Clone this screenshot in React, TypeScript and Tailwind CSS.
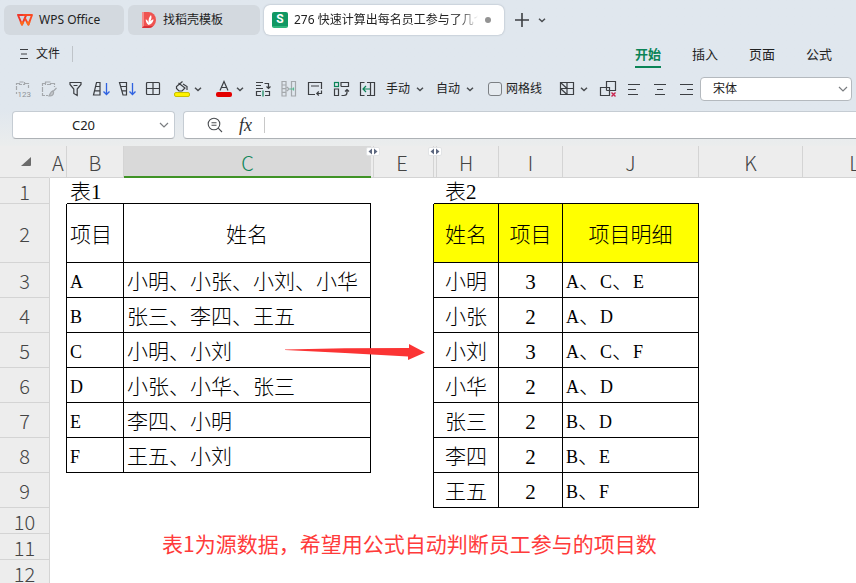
import React, { useState } from "react";

const tableOne = [
  ["A", "小明、小张、小刘、小华"],
  ["B", "张三、李四、王五"],
  ["C", "小明、小刘"],
  ["D", "小张、小华、张三"],
  ["E", "李四、小明"],
  ["F", "王五、小刘"],
];

const tableTwo = [
  ["小明", "3", "A、C、E"],
  ["小张", "2", "A、D"],
  ["小刘", "3", "A、C、F"],
  ["小华", "2", "A、D"],
  ["张三", "2", "B、D"],
  ["李四", "2", "B、E"],
  ["王五", "2", "B、F"],
];

const menuTabs = ["开始", "插入", "页面", "公式"];

const Icon = ({ children, color = "#3c3f43" }: { children: React.ReactNode; color?: string }) => (
  <svg width="18" height="18" viewBox="0 0 18 18" fill="none" stroke={color} strokeWidth="1.2" aria-hidden="true">
    {children}
  </svg>
);

const Tool = ({ label, children }: { label: string; children: React.ReactNode }) => (
  <button type="button" title={label} aria-label={label} className="flex items-center shrink-0">
    {children}
  </button>
);

const Chevron = () => (
  <svg width="8" height="8" viewBox="0 0 8 8" fill="none" stroke="#4a4d51" strokeWidth="1.5" aria-hidden="true">
    <path d="M1 2.8 L4 5.5 L7 2.8" />
  </svg>
);

const WideChevron = () => (
  <svg width="10" height="10" viewBox="0 0 10 10" fill="none" stroke="#7a7d80" strokeWidth="1.2" aria-hidden="true">
    <path d="M1 3 L5 7 L9 3" />
  </svg>
);

const DownArrow = () => <path d="M14.5 3 V14.5 M11.5 11.5 L14.5 14.5 L17.5 11.5" stroke="#2f62e0" strokeWidth="1.3" />;

// latin letters are set a bit smaller so they sit well next to the hanzi
const CellText = ({ text }: { text: string }) => (
  <>
    {text.split(/([A-Z])/).map((part, i) =>
      /[A-Z]/.test(part) ? (
        <span key={i} className="text-[18px]">{part}</span>
      ) : (
        part
      )
    )}
  </>
);

const HiddenMark = () => (
  <span className="absolute z-10 -right-[9px] top-px flex h-[9px] w-[14px] items-center justify-center rounded-xs border border-[#e2e4e6] bg-white">
    <svg width="10" height="7" viewBox="0 0 10 7" fill="#5d6880" className="shrink-0" aria-hidden="true">
      <path d="M4 0.5 V6.5 L0.5 3.5 Z M6 0.5 V6.5 L9.5 3.5 Z" />
    </svg>
  </span>
);

const TitleBar = () => (
  <div className="flex h-10 items-center px-1">
    <button type="button" className="flex h-[30px] w-[120px] items-center gap-[6px] rounded-md bg-[#d3d9df] pl-[13px]">
      <svg width="16" height="12" viewBox="0 0 16 12" fill="none" stroke="#f0372b" strokeWidth="1.9" strokeLinejoin="round" aria-hidden="true">
        <path d="M1 1 H9.2 L5 10.6 Z" />
        <path d="M5.8 1 H15 L11.4 10.6 L7.8 4" stroke="#fb4a22" />
        <path d="M3.6 7.5 L5 10.6 L6.3 7.6 M10 8 L11.4 10.6 L12.6 7.5" stroke="#ff6a1a" />
      </svg>
      WPS Office
    </button>
    <button type="button" className="ml-1 flex h-[30px] w-[132px] items-center gap-[7px] rounded-md bg-[#d3d9df] pl-[14px]">
      <svg width="14" height="16" viewBox="0 0 14 16" aria-hidden="true">
        <path d="M0 0 H6.5 A7.5 8 0 0 1 6.5 16 H0 Z" fill="#ef5350" />
        <path d="M0 0 H2 V14 L0 16 Z" fill="#f58d8a" />
        <path d="M0 16 L2 14 H11 C10 15.3 8.5 16 6.5 16 Z" fill="#d93036" />
        <path d="M6.5 13 C4.5 11.5 3.5 9.5 3.8 7.3 C5.5 8.3 6.5 9.7 6.8 11.2 C6.2 8 6.8 5 9 3 C10 5.3 9.5 7 8.3 9 C9.3 7.9 10.4 7.4 11.6 7.4 C11.2 10 9.5 12.2 6.5 13 Z" fill="#fff" />
      </svg>
      找稻壳模板
    </button>
    <div className="ml-1 flex h-[30px] w-[240px] items-center rounded-md bg-white pl-2 shadow-[0_0_2px_#9aa5b1]">
      <span className="flex size-4 shrink-0 items-center justify-center rounded-xs border-b-2 border-[#2fb57c] bg-[#109863] font-[Roboto] text-[12px] leading-none font-bold text-white">S</span>
      <span className="ml-[6px] w-[184px] overflow-hidden whitespace-nowrap [mask-image:linear-gradient(to_right,black_90%,transparent)]">
        276 快速计算出每名员工参与了几个
      </span>
      <span className="ml-[7px] size-[6px] shrink-0 rounded-full bg-[#939393]"></span>
    </div>
    <button type="button" aria-label="新建" className="ml-[11px]">
      <svg width="14" height="14" viewBox="0 0 14 14" stroke="#3c3f43" strokeWidth="1.6" aria-hidden="true">
        <path d="M7 0 V14 M0 7 H14" />
      </svg>
    </button>
    <button type="button" aria-label="更多" className="ml-[9px]"><Chevron /></button>
  </div>
);

const MenuBar = () => {
  const [active, setActive] = useState("开始");
  return (
    <div className="flex h-8 items-center pl-5 pr-6">
      <button type="button" className="-mt-1 flex items-center gap-2">
        <svg width="8" height="12" viewBox="0 0 8 12" stroke="#3c3f43" strokeWidth="1" aria-hidden="true">
          <path d="M0 1.5 H8 M1 6 H7 M0 10.5 H8" />
        </svg>
        文件
      </button>
      <div className="-mt-1 ml-3 h-4 w-px bg-[#bfc4c9]"></div>
      <nav className="ml-auto flex gap-[31px] text-[13px]">
        {menuTabs.map((tab) => (
          <button
            key={tab}
            type="button"
            onClick={() => setActive(tab)}
            className={
              tab === active
                ? "h-6 border-b-2 border-[#0b8457] font-bold text-[#0b8457]"
                : "h-6 border-b-2 border-transparent"
            }
          >
            {tab}
          </button>
        ))}
      </nav>
    </div>
  );
};

const Toolbar = () => (
  <div className="flex h-[34px] items-center pl-[14px] pr-1">
    <div className="flex gap-2">
      <Tool label="粘贴数值">
        <Icon color="#a4a8ac">
          <path d="M5 3.5 H2.5 V10 M2.5 12 V14 M11 3.5 H14.5 V8 M5.5 2 H10.5 V4.5 H5.5 Z" strokeDasharray="4 1" />
          <text x="3.5" y="17" fontSize="8" fontFamily="Roboto" fill="#8f9398" stroke="none">123</text>
        </Icon>
      </Tool>
      <Tool label="粘贴格式">
        <Icon color="#a4a8ac">
          <path d="M5 3.5 H2.5 V15.5 H8 M11 3.5 H14.5 V7 M5.5 2 H10.5 V4.5 H5.5 Z" strokeDasharray="5 1" />
          <path d="M16.5 8 L12.5 12 M12.5 11 C10.5 11.5 10.5 14 9 15.8 C11.5 16.3 13.8 15 13.6 12.4 Z" fill="#c3c7cb" />
        </Icon>
      </Tool>
      <Tool label="筛选">
        <Icon>
          <path d="M4 2.5 H15 V4.5 L11.2 9 V15.5 L7.8 13.5 V9 L4 4.5 Z M7.5 5.5 H11.5" />
        </Icon>
      </Tool>
      <Tool label="升序">
        <Icon>
          <path d="M4.5 2.5 H8 V15 H1.5 Z M3.8 6.5 H8 M2.7 10.8 H8" />
          <DownArrow />
        </Icon>
      </Tool>
      <Tool label="降序">
        <Icon>
          <path d="M1.5 2.5 H8.5 V15 H5 Z M2.6 6.5 H8.5 M3.8 10.8 H8.5" />
          <DownArrow />
        </Icon>
      </Tool>
      <Tool label="边框">
        <Icon>
          <rect x="2.5" y="2.5" width="13" height="12" rx="1" />
          <path d="M9 2.5 V14.5 M2.5 8.5 H15.5" />
        </Icon>
      </Tool>
    </div>
    <div className="ml-[11px] flex gap-[13px]">
      <Tool label="填充颜色">
        <Icon>
          <path d="M5.5 3 L12 8 L9 11 H6 L3.5 8.5 V6.5 L9.5 1.5 M10 4 L14 6.5 V10" />
          <rect x="1.5" y="12.5" width="15" height="4" rx="1.5" fill="#fff200" stroke="#c9c000" strokeWidth="1" />
        </Icon>
        <span className="ml-[3px]"><Chevron /></span>
      </Tool>
      <Tool label="字体颜色">
        <svg width="18" height="18" viewBox="0 0 18 18" aria-hidden="true">
          <path d="M5 10.5 L9 1.5 L13 10.5 M6.3 7.5 H11.7" fill="none" stroke="#3c3f43" strokeWidth="1.2" />
          <rect x="1" y="12" width="16" height="5" rx="2" fill="#e30000" />
        </svg>
        <span className="ml-[3px]"><Chevron /></span>
      </Tool>
    </div>
    <div className="ml-[10px] flex gap-2">
      <Tool label="转置">
        <Icon>
          <path d="M2 2.5 H9 M2 5.5 H7 M2 8.5 H9 M10.5 3.5 H14.5 V8.5 M12.5 6.5 L14.5 8.5 L16.5 6.5 M7 11.5 H2.5 V15.5 H7 M11 11.5 H15.5 V15.5 H11" />
          <path d="M9 10.5 V16.5" stroke="#0b8457" />
        </Icon>
      </Tool>
      <Tool label="分列">
        <Icon color="#a4a8ac">
          <path d="M2 1.5 H6 V16 H2 Z M2 5 H6 M2 8.7 H6 M2 12.3 H6 M11.5 1.5 H15.5 V16 H11.5 Z M7 7 L9 9 L7 11" />
          <path d="M13.5 7.5 V10.5 M9.5 9 H13.5" stroke="#58b892" />
        </Icon>
      </Tool>
      <Tool label="自动换行">
        <Icon>
          <path d="M9 14.5 H2.5 V2.5 H15.5 V9 M5 6 H13 M15.5 10.5 V13.5 H11 M12.8 11.5 L10.8 13.5 L12.8 15.5" />
        </Icon>
      </Tool>
      <Tool label="套用表格">
        <Icon>
          <rect x="2.5" y="2.5" width="4" height="4" stroke="#0b8457" />
          <path d="M9 6.5 V2.5 H16.5 V6.5 H9 M2.5 9 H6.5 V15.5 H2.5 Z M9.5 15.5 H12 C14 15.5 15 14.5 15 12.5 V9.5 M13 11.5 L15 9.5 L17 11.5" />
        </Icon>
      </Tool>
      <Tool label="合并">
        <Icon>
          <path d="M6.5 2.5 H2.5 V15.5 H6.5 M9 2.5 H16.5 V15.5 H9 M12.5 2.5 V15.5" />
          <path d="M5 9 H12 M8 6 L5 9 L8 12" stroke="#0b8457" />
        </Icon>
      </Tool>
    </div>
    <div className="ml-[10px] flex gap-3">
      <button type="button" className="flex items-center gap-[6px]">手动 <Chevron /></button>
      <button type="button" className="flex items-center gap-[6px]">自动 <Chevron /></button>
    </div>
    <label className="ml-[14px] flex items-center gap-1 whitespace-nowrap">
      <input type="checkbox" className="size-[14px] appearance-none rounded-[3px] border border-[#7c8084] bg-[#e6ebf0] checked:bg-[#0b8457]" />
      网格线
    </label>
    <div className="ml-4 flex gap-[11px]">
      <Tool label="单元格样式">
        <Icon>
          <path d="M2.5 2.5 H15.5 V14.5 H2.5 Z M9 2.5 V14.5 M2.5 8.5 H15.5 M2.5 2.5 L9 8.5 M2.5 8.5 L9 14.5" />
        </Icon>
        <span className="ml-1"><Chevron /></span>
      </Tool>
      <Tool label="取消合并">
        <Icon>
          <path d="M7.5 10.5 V1.5 H16.5 V10.5 H7.5 M7.5 7.5 H1.5 V15.5 H10.5 V7.5 H7.5" />
          <path d="M12.5 12.5 L16.5 16.5 M16.5 12.5 L12.5 16.5" stroke="#c9254f" strokeWidth="1.4" />
        </Icon>
      </Tool>
    </div>
    <div className="ml-2 flex gap-2">
      <Tool label="左对齐">
        <Icon><path d="M3 4.5 H15 M3 9.5 H11 M3 14.5 H13" strokeWidth="1" /></Icon>
      </Tool>
      <Tool label="居中">
        <Icon><path d="M3 4.5 H15 M6 9.5 H12 M4 14.5 H14" strokeWidth="1" /></Icon>
      </Tool>
      <Tool label="右对齐">
        <Icon><path d="M3 4.5 H16 M10 9.5 H16 M3 14.5 H16" strokeWidth="1" /></Icon>
      </Tool>
    </div>
    <div className="relative ml-[5px] grow">
      <select aria-label="字体" className="h-6 w-full appearance-none rounded-sm border border-[#b4b9be] bg-white pl-3">
        <option>宋体</option>
      </select>
      <span className="pointer-events-none absolute right-1 top-[7px]"><WideChevron /></span>
    </div>
  </div>
);

const FormulaBar = () => (
  <div className="mt-[5px] flex h-7 gap-2 pl-3">
    <div className="relative w-[163px] shrink-0">
      <input
        aria-label="名称框"
        defaultValue="C20"
        className="h-full w-full rounded-sm border border-[#c5ccd3] border-b-[#adb1b5] bg-white pr-5 text-center text-[13px]"
      />
      <span className="absolute right-[6px] top-[9px]"><WideChevron /></span>
    </div>
    <div className="flex grow items-center rounded-l-sm border border-r-0 border-[#c5ccd3] border-b-[#adb1b5] bg-white pl-[23px]">
      <svg width="16" height="16" viewBox="0 0 16 16" fill="none" stroke="#4b4e52" strokeWidth="1.1" aria-hidden="true">
        <circle cx="7" cy="7" r="5.8" />
        <path d="M4.5 5.7 H9.5 M4.5 8.3 H9.5 M11.2 11.2 L15 15" />
      </svg>
      <span className="ml-4 font-['Liberation_Serif'] text-[18px] leading-none italic text-[#2f3133]">fx</span>
      <span className="ml-3 h-4 w-px bg-[#c8c8c8]"></span>
      <input aria-label="公式" className="ml-2 h-full grow outline-none" />
    </div>
  </div>
);

const headCell = "relative h-8 border-b border-r border-[#d4d4d4] p-0 pt-[2px] font-light";
const rowHead = "border-b border-r border-[#d4d4d4] bg-[#ededed] p-0 pt-[2px] font-['Noto_Sans_CJK_SC',sans-serif] text-[20px] font-light text-[#444]";
const cell = "border-b border-r border-black p-0 pt-[3px] pl-[3px] text-left";
const centered = "border-b border-r border-black p-0 pt-[3px] text-center";
const leftEdge = "border-r border-black p-0";

const Sheet = () => (
  <table className="w-full min-w-[907px] table-fixed border-separate border-spacing-0 bg-white font-['Liberation_Serif','Noto_Sans_CJK_SC',serif] text-[21px] leading-[22px] font-light text-black">
    <colgroup>
      <col className="w-[50px]" />
      <col className="w-[17px]" />
      <col className="w-[57px]" />
      <col className="w-[247px]" />
      <col className="w-[63px]" />
      <col className="w-[65px]" />
      <col className="w-[64px]" />
      <col className="w-[136px]" />
      <col className="w-[104px]" />
      <col className="w-[104px]" />
      <col />
    </colgroup>
    <thead className="bg-[#ededed] font-['Noto_Sans_CJK_SC',sans-serif] text-[20px] text-[#444]">
      <tr>
        <th className="border-r border-b border-r-transparent border-b-[#d4d4d4] p-0">
          <svg width="10" height="9" viewBox="0 0 10 9" className="ml-[21px]" fill="#6b6b6b" aria-hidden="true">
            <path d="M10 0 V8 Q10 9 9 9 H0 Z" />
          </svg>
        </th>
        <th className={headCell}>A</th>
        <th className={headCell}>B</th>
        <th className="relative border-b-2 border-[#3f9326] bg-[#d9d9d9] p-0 pt-[3px] font-light text-[#0b8457]">
          C
          <HiddenMark />
        </th>
        <th className={headCell}>
          <span className="absolute left-[2px] top-0 h-full w-px bg-[#d4d4d4]"></span>
          E
          <HiddenMark />
        </th>
        <th className={headCell}>
          <span className="absolute left-[2px] top-0 h-full w-px bg-[#d4d4d4]"></span>
          H
        </th>
        <th className={headCell}>I</th>
        <th className={headCell}>J</th>
        <th className={headCell}>K</th>
        <th className={headCell}>L</th>
        <th className={headCell}></th>
      </tr>
    </thead>
    <tbody>
      <tr className="h-[26px]">
        <th className={rowHead}>1</th>
        <td></td>
        <td className="border-b border-black p-0 pt-[3px] pl-[3px]">表1</td>
        <td className="border-b border-black"></td>
        <td></td>
        <td className="border-b border-black p-0 pt-[3px] pl-[11px] whitespace-nowrap">表2</td>
        <td className="border-b border-black"></td>
        <td className="border-b border-black"></td>
        <td colSpan={3}></td>
      </tr>
      <tr className="h-[59px]">
        <th className={rowHead}>2</th>
        <td className={leftEdge}></td>
        <td className={cell}>项目</td>
        <td className={centered}>姓名</td>
        <td className={leftEdge}></td>
        <td className={`${centered} bg-[#ffff00]`}>姓名</td>
        <td className={`${centered} bg-[#ffff00]`}>项目</td>
        <td className={`${centered} bg-[#ffff00]`}>项目明细</td>
        <td colSpan={3}></td>
      </tr>
      {tableTwo.map(([name, count, detail], i) => {
        const source = tableOne[i];
        return (
          <tr key={name} className="h-[35px]">
            <th className={rowHead}>{i + 3}</th>
            <td className={source ? leftEdge : "p-0"}></td>
            <td className={source ? cell : "p-0"}>{source && <CellText text={source[0]} />}</td>
            <td className={source ? `${cell} relative` : "p-0"}>
              {source && source[1]}
              {/* arrow from table 1 to table 2 */}
              {i === 2 && (
                <svg width="140" height="18" viewBox="0 0 140 18" className="absolute left-[161px] top-[11px] z-10" aria-hidden="true">
                  <path d="M0 5.5 L60 4.2 L124 4 V0 L140 8.5 L123 16 V12.5 L60 9 L0 6 Z" fill="#fb3434" />
                </svg>
              )}
            </td>
            <td className={leftEdge}></td>
            <td className={centered}>{name}</td>
            <td className={centered}>{count}</td>
            <td className={cell}><CellText text={detail} /></td>
            <td colSpan={3}></td>
          </tr>
        );
      })}
      <tr className="h-[26px]">
        <th className={rowHead}>10</th>
        <td colSpan={10}></td>
      </tr>
      <tr className="h-[26px]">
        <th className={rowHead}>11</th>
        <td colSpan={2} className="p-0"></td>
        <td colSpan={8} className="relative p-0">
          <p className="absolute left-[38px] -top-[2px] font-['Noto_Sans_CJK_SC',sans-serif] font-normal whitespace-nowrap text-[#ff3b3b]">
            表1为源数据，希望用公式自动判断员工参与的项目数
          </p>
        </td>
      </tr>
      <tr className="h-[26px]">
        <th className={rowHead}>12</th>
        <td colSpan={10}></td>
      </tr>
    </tbody>
  </table>
);

const App = () => {
  return (
    <div className="flex h-screen flex-col overflow-hidden bg-white font-['Noto_Sans','Noto_Sans_CJK_SC',sans-serif] text-[12px] text-[#222]">
      <header className="bg-linear-to-b from-[#e0e7ee] from-75% to-[#ebeded] pb-[7px]">
        <TitleBar />
        <MenuBar />
        <Toolbar />
        <FormulaBar />
      </header>
      <main className="grow overflow-hidden">
        <Sheet />
      </main>
    </div>
  );
};

export default App;
